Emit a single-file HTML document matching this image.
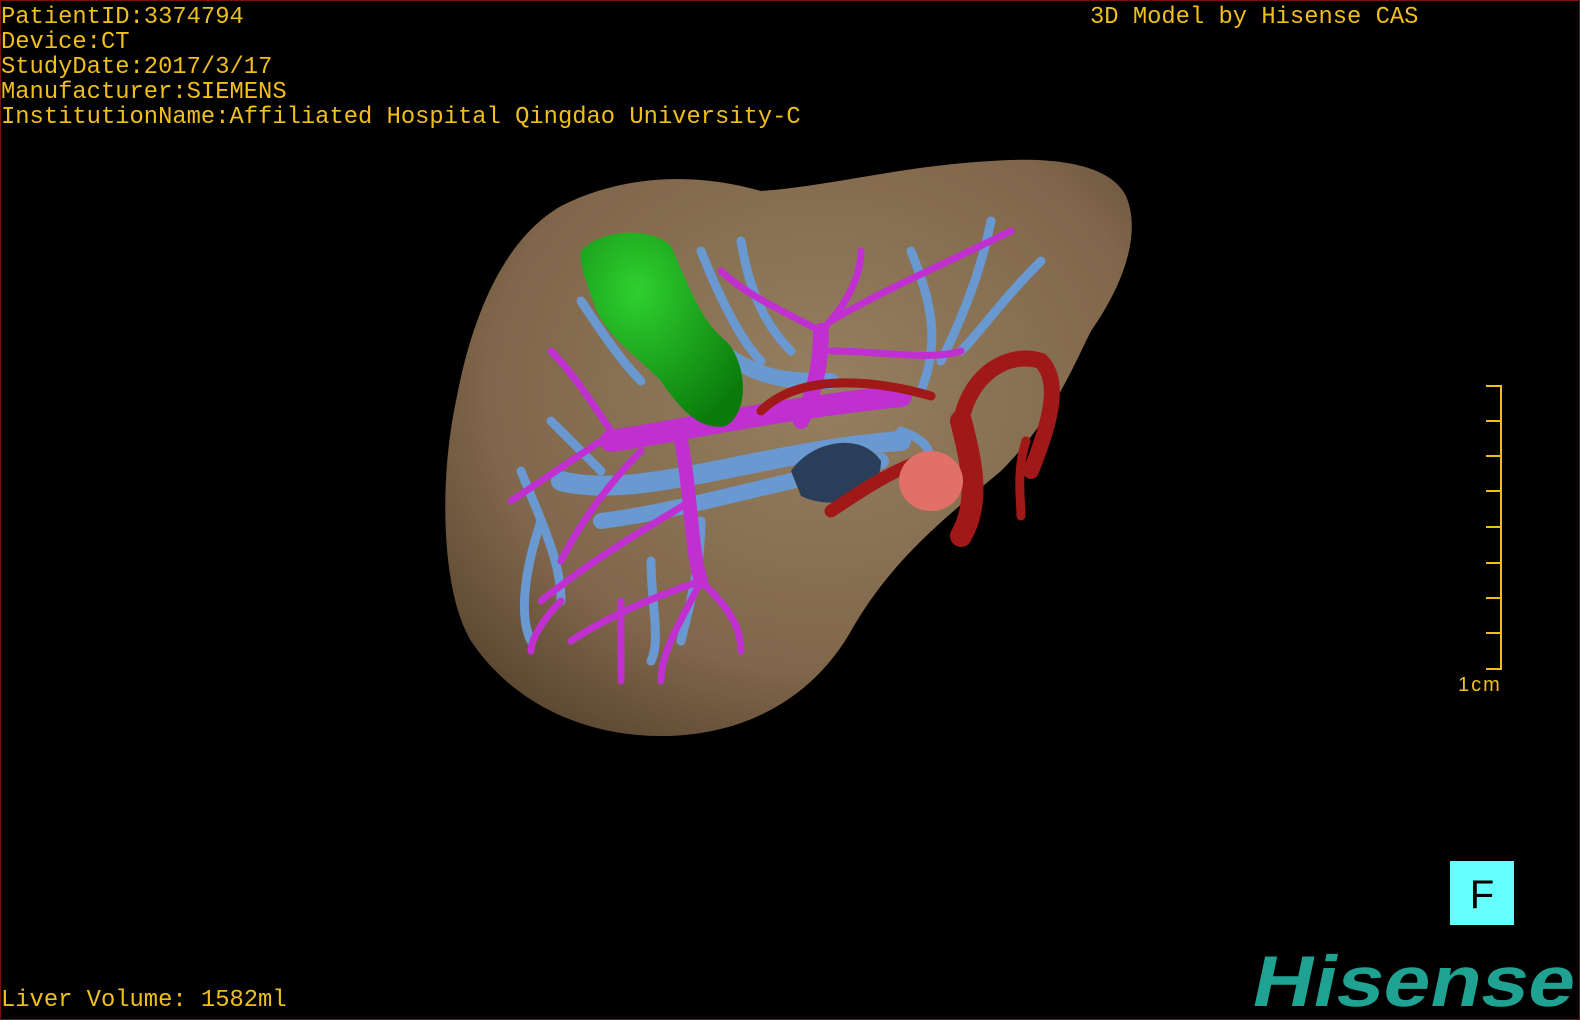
<!DOCTYPE html>
<html><head><meta charset="utf-8"><style>
html,body{margin:0;padding:0;background:#000;}
#w{position:relative;width:1580px;height:1020px;background:#000;overflow:hidden;box-sizing:border-box;border:1px solid #7a1010;}
.t{position:absolute;color:#f0bf1c;font-family:"Liberation Mono",monospace;font-size:23.8px;line-height:25px;white-space:pre;}
svg{position:absolute;left:0;top:0;}
</style></head><body><div id="w">
<svg width="1580" height="1020" viewBox="0 0 1580 1020">
<defs>
<radialGradient id="lv" cx="0.55" cy="0.4" r="0.7">
<stop offset="0" stop-color="#958060"/><stop offset="0.7" stop-color="#80664a"/><stop offset="1" stop-color="#5a4630"/>
</radialGradient>
<radialGradient id="gb" cx="0.35" cy="0.3" r="0.8"><stop offset="0" stop-color="#2fd030"/><stop offset="1" stop-color="#0a7a0a"/></radialGradient>
</defs>
<path d="M455,400 C470,320 500,240 560,205 C620,175 690,170 760,190 C830,185 900,165 990,160 C1060,155 1110,165 1125,195 C1140,230 1125,280 1090,330 C1070,370 1050,420 1000,470 C940,520 890,560 850,630 C810,700 740,735 660,735 C580,735 510,700 470,640 C440,590 438,480 455,400 Z" fill="url(#lv)"/>
<g fill="none" stroke-linecap="round">
<g stroke="#6a98d0">
<path d="M560,480 C640,500 760,450 900,440" stroke-width="20"/>
<path d="M600,520 C680,510 780,480 880,460" stroke-width="16"/>
<path d="M720,350 C760,380 790,380 830,380" stroke-width="16"/>
<path d="M700,250 C720,300 740,340 760,360 M740,240 C750,300 770,330 790,350 M910,250 C930,300 940,340 920,390 M990,220 C980,270 960,320 940,360 M1040,260 C1000,300 980,330 960,350 M580,300 C600,330 620,360 640,380 M520,470 C540,520 560,560 560,600 M540,520 C520,580 520,620 530,640 M650,560 C650,600 660,640 650,660 M700,520 C700,560 690,600 680,640 M900,430 C930,440 940,460 910,470 M550,420 C570,440 590,460 600,470" stroke-width="9"/>
</g>
<path d="M790,470 C810,440 860,430 880,460 C880,500 830,510 800,495 Z" fill="#2a3e5a" stroke="none"/>
<g stroke="#c030d0">
<path d="M610,440 C680,430 760,410 900,395" stroke-width="22"/>
<path d="M680,440 C690,490 690,550 700,580" stroke-width="14"/>
<path d="M820,330 C820,370 810,400 800,420" stroke-width="16"/>
<path d="M610,430 C590,400 570,370 550,350 M600,440 C570,460 540,480 510,500 M640,450 C610,480 580,520 560,560 M690,500 C640,530 590,560 540,600 M700,580 C720,600 740,620 740,650 M700,580 C680,620 660,650 660,680 M700,580 C640,600 600,620 570,640 M820,330 C780,310 740,290 720,270 M820,330 C850,300 860,270 860,250 M830,320 C880,290 950,260 1010,230 M830,350 C880,350 930,360 960,350 M560,600 C540,620 530,640 530,650 M620,600 C620,640 620,660 620,680" stroke-width="7"/>
</g>
<g stroke="#a01818">
<path d="M760,410 C800,370 880,380 930,395" stroke-width="9"/>
<path d="M960,420 C970,370 1010,350 1040,360 C1060,380 1050,420 1030,470" stroke-width="16"/>
<path d="M1025,440 C1015,470 1020,500 1020,515" stroke-width="9"/>
<path d="M960,420 C970,460 980,500 960,535" stroke-width="22"/>
<path d="M830,510 C860,490 890,470 920,460" stroke-width="13"/>
</g>
</g>
<ellipse cx="930" cy="480" rx="32" ry="30" fill="#e07068"/>
<path d="M580,250 C600,228 650,225 670,245 C690,290 700,320 725,340 C745,360 750,410 725,425 C700,430 680,410 660,380 C630,350 600,330 592,300 C585,280 578,262 580,250 Z" fill="url(#gb)"/>
<line x1="1500" y1="385" x2="1500" y2="668" stroke="#f0bf1c" stroke-width="2"/>
<g stroke="#f0bf1c" stroke-width="2">
<line x1="1485" y1="385" x2="1501" y2="385"/><line x1="1485" y1="420" x2="1501" y2="420"/><line x1="1485" y1="455" x2="1501" y2="455"/><line x1="1485" y1="490" x2="1501" y2="490"/><line x1="1485" y1="526" x2="1501" y2="526"/><line x1="1485" y1="562" x2="1501" y2="562"/><line x1="1485" y1="597" x2="1501" y2="597"/><line x1="1485" y1="632" x2="1501" y2="632"/><line x1="1485" y1="668" x2="1501" y2="668"/>
</g>
<text x="1457" y="690" fill="#f0bf1c" font-family="Liberation Sans, sans-serif" font-size="20" letter-spacing="2">1cm</text>
<rect x="1449" y="860" width="64" height="64" fill="#66ffff"/>
<text x="1481" y="907" fill="#000" font-family="Liberation Sans, sans-serif" font-size="40" text-anchor="middle">F</text>
<g transform="translate(1248,1005) skewX(-12)">
<text x="0" y="0" fill="#1fa292" font-family="Liberation Sans, sans-serif" font-weight="bold" font-size="72" textLength="322" lengthAdjust="spacingAndGlyphs">Hisense</text>
</g>
</svg>
<div class="t" style="left:0;top:4px;">PatientID:3374794
Device:CT
StudyDate:2017/3/17
Manufacturer:SIEMENS
InstitutionName:Affiliated Hospital Qingdao University-C</div>
<div class="t" style="left:1089px;top:4px;">3D Model by Hisense CAS</div>
<div class="t" style="left:0;top:987px;">Liver Volume: 1582ml</div>
</div></body></html>
